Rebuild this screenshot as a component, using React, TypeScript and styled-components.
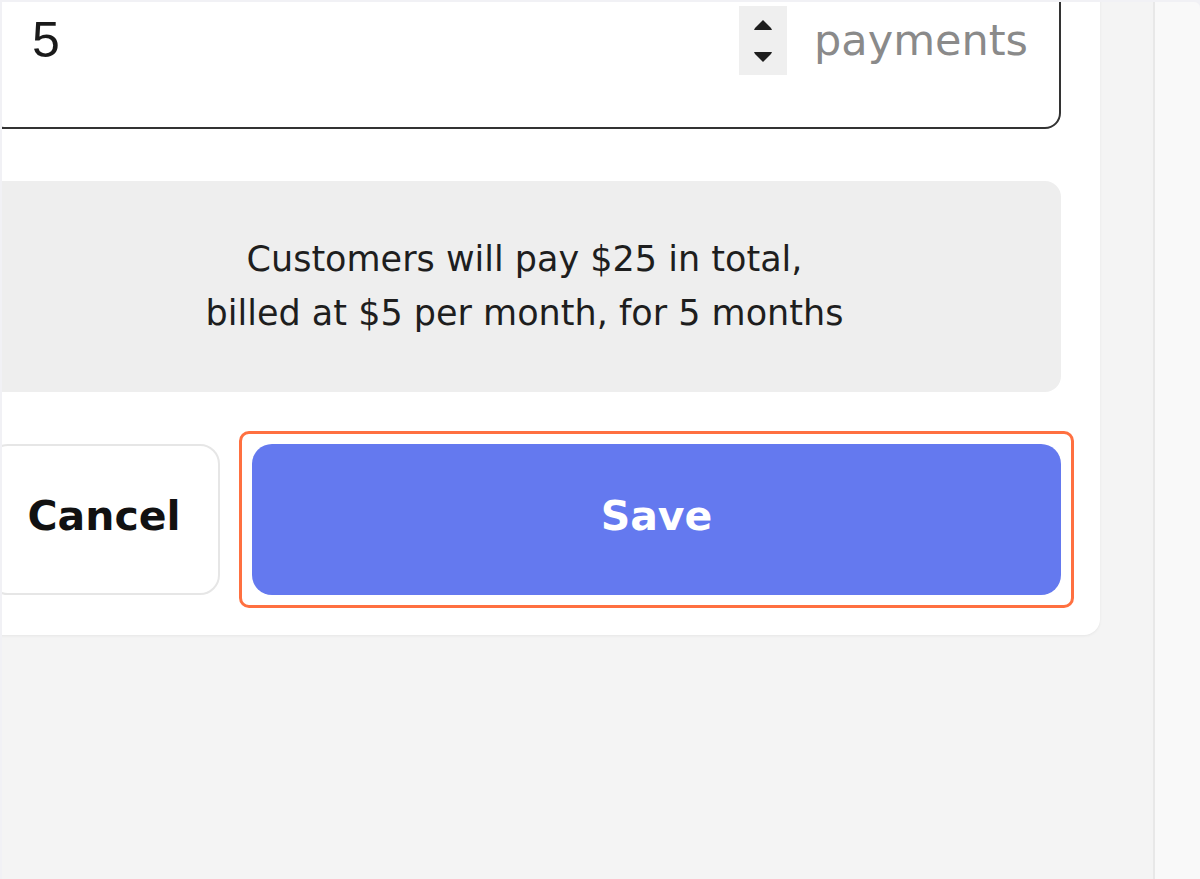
import React from "react";
import styled, { createGlobalStyle } from "styled-components";

const Global = createGlobalStyle`
  html, body { margin: 0; padding: 0; }
  body {
    background: #f1f1f5;
    width: 1200px;
    height: 879px;
    overflow: hidden;
    font-family: "DejaVu Sans", "Open Sans", sans-serif;
  }
  #root { height: 100%; }
`;

const Frame = styled.div`
  display: flex;
  height: 877px;
  margin: 2px 0 0 2px;
  background: #f4f4f4;
  border-top-right-radius: 6px;
  overflow: hidden;
`;

const Main = styled.div`
  width: 1151px;
  flex: none;
  overflow: hidden;
`;

const Card = styled.div`
  margin: -62px 0 0 -53px;
  width: 1151px;
  box-sizing: border-box;
  background: #ffffff;
  border-radius: 0 0 16px 16px;
  box-shadow: 0 1px 3px rgba(0, 0, 0, 0.06);
  padding: 39px 39px 40px 39px;
  display: flex;
  flex-direction: column;
  gap: 52px;
`;

const InputBox = styled.div`
  display: flex;
  align-items: center;
  border: 2px solid #333333;
  border-radius: 16px;
  padding: 25px 31px 52px 42px;
`;

const Value = styled.div`
  flex: 1;
  font-family: "Liberation Sans", Arial, sans-serif;
  font-size: 50px;
  color: #1a1a1a;
  line-height: 69px;
`;

const Spinner = styled.div`
  width: 48px;
  height: 69px;
  background: #efefef;
  display: flex;
  flex-direction: column;
  align-items: center;
  justify-content: center;
  gap: 20px;
  margin-right: 27px;
`;

const Unit = styled.div`
  font-size: 43px;
  color: #8a8a8a;
  line-height: 69px;
`;

const Summary = styled.div`
  background: #eeeeee;
  border-radius: 16px;
  padding: 51px 20px 52px;
  text-align: center;
  font-size: 35px;
  line-height: 54px;
  color: #1e1e1e;
`;

const Actions = styled.div`
  display: flex;
  gap: 32px;
`;

const Button = styled.button<{ $primary?: boolean }>`
  position: relative;
  height: 151px;
  box-sizing: border-box;
  border-radius: 20px;
  font-family: "DejaVu Sans", "Open Sans", sans-serif;
  font-weight: 700;
  font-size: 41px;
  padding: 0 0 8px;
  cursor: pointer;
  flex: ${(p) => (p.$primary ? "1" : "none")};
  width: ${(p) => (p.$primary ? "auto" : "232px")};
  background: ${(p) => (p.$primary ? "#6479ef" : "#ffffff")};
  color: ${(p) => (p.$primary ? "#ffffff" : "#111111")};
  border: ${(p) => (p.$primary ? "none" : "2px solid #e6e6e6")};
`;

const Highlight = styled.span`
  position: absolute;
  inset: -13px;
  border: 3px solid #ff7040;
  border-radius: 10px;
  pointer-events: none;
`;

const Side = styled.div`
  flex: 1;
  border-left: 2px solid #e8e8e8;
  background: #f9f9f9;
`;

const Arrow = ({ up }: { up?: boolean }) => (
  <svg width="20" height="12" viewBox="0 0 20 12">
    <path
      d={up ? "M10 1 L18 9 L19 11 L1 11 L2 9 Z" : "M1 1 L19 1 L18 3 L10 11 L2 3 Z"}
      fill="#1e1e1e"
    />
  </svg>
);

export default function App() {
  return (
    <>
      <Global />
      <Frame>
        <Main>
          <Card>
            <InputBox>
              <Value>5</Value>
              <Spinner>
                <Arrow up />
                <Arrow />
              </Spinner>
              <Unit>payments</Unit>
            </InputBox>
            <Summary>
              Customers will pay $25 in total,
              <br />
              billed at $5 per month, for 5 months
            </Summary>
            <Actions>
              <Button>Cancel</Button>
              <Button $primary>
                Save
                <Highlight />
              </Button>
            </Actions>
          </Card>
        </Main>
        <Side />
      </Frame>
    </>
  );
}
